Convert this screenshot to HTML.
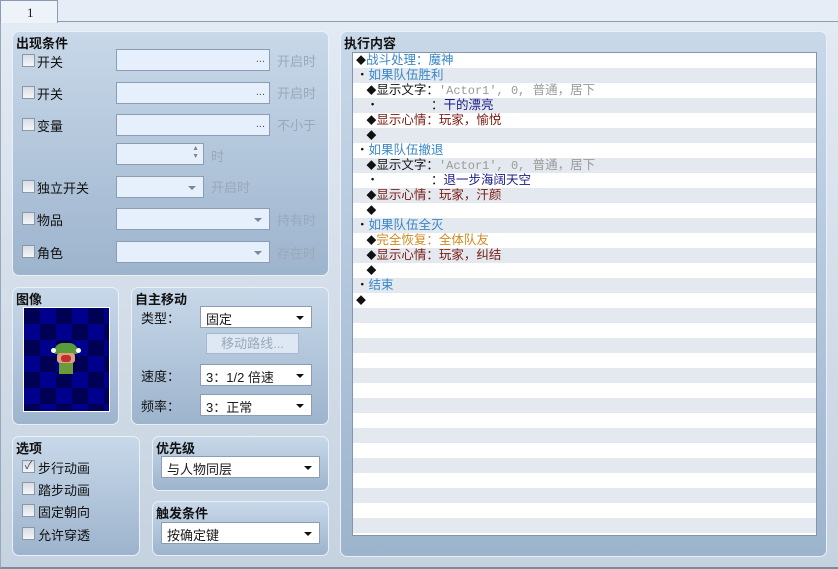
<!DOCTYPE html>
<html><head><meta charset="utf-8"><style>
*{box-sizing:border-box;margin:0;padding:0}
body{width:838px;height:569px;overflow:hidden;font-family:"Liberation Sans","Noto Sans CJK SC",sans-serif;font-size:13px;color:#1a1a1a;position:relative;background:#e6edf6}
.page{position:absolute;left:0;top:21px;width:838px;height:548px;background:linear-gradient(#e2eaf4,#c5d2df);border-top:1px solid #8a9cb2;border-left:1px solid #98a8bb;border-bottom:2px solid #7d8a99}
.tab{position:absolute;left:0;top:0;width:58px;height:23px;background:#eef3fa;border:1px solid #8a9cb2;border-bottom:none;z-index:2;font-family:"Liberation Serif",serif;font-size:13px;padding:4px 0 0 26px}
.g{position:absolute;border-radius:7px;background:linear-gradient(#c8d8e9,#9db4cd);border:1px solid #e8f0f8}
.t{position:absolute;left:3px;top:1px;font-weight:bold;font-size:13px;color:#111}
.in{position:absolute;background:#e6f0fc;border:1px solid #8c9db3;height:22px}
.dots{position:absolute;right:4px;top:3px;font-size:11px;color:#555}
.gray{position:absolute;color:#9aa8ba;font-size:13px}
.cb{position:absolute;width:13px;height:13px;border:1px solid #8a97a6;background:linear-gradient(#d8dde3,#f4f6f8)}
.lb{position:absolute;font-size:13px;color:#111}
.arr{position:absolute;right:7px;top:9px;width:0;height:0;border-left:4px solid transparent;border-right:4px solid transparent;border-top:4px solid #7a8898}
.sel{position:absolute;background:#fff;border:1px solid #8c9db3;height:22px;padding:2px 5px;font-size:13px}
.sel .arr{border-top-color:#111}
.list{position:absolute;left:352px;top:52px;width:465px;height:484px;border:1px solid #8594a8;overflow:hidden;background:#fff}
.row{height:15px;line-height:15px;font-size:12.5px;white-space:nowrap;padding-left:3px}
.row:nth-child(even){background:#e3e9ef}
.d{font-size:10px;color:#111}
.b{color:#3a87c8}.k{color:#111}.m{color:#9a9a9a;font-family:"Liberation Mono","Noto Sans CJK SC",monospace;font-size:12px}.n{color:#1a1a8a}.r{color:#7a1a10}.o{color:#d08a20}
</style></head><body>
<div class="tab">1</div>
<div class="page"></div>

<div class="g" style="left:12px;top:31px;width:317px;height:245px">
<div class="t">出现条件</div></div>
<div class="cb" style="left:22px;top:54px"></div><div class="lb" style="left:37px;top:52px">开关</div>
<div class="in" style="left:116px;top:49px;width:154px"><span class="dots">...</span></div><div class="gray" style="left:277px;top:51px">开启时</div>
<div class="cb" style="left:22px;top:86px"></div><div class="lb" style="left:37px;top:84px">开关</div>
<div class="in" style="left:116px;top:82px;width:154px"><span class="dots">...</span></div><div class="gray" style="left:277px;top:83px">开启时</div>
<div class="cb" style="left:22px;top:118px"></div><div class="lb" style="left:37px;top:116px">变量</div>
<div class="in" style="left:116px;top:114px;width:154px"><span class="dots">...</span></div><div class="gray" style="left:277px;top:115px">不小于</div>
<div class="in" style="left:116px;top:143px;width:88px"><span style="position:absolute;right:4px;top:1px;font-size:7px;color:#888;line-height:8px">▲<br>▼</span></div><div class="gray" style="left:211px;top:146px">时</div>
<div class="cb" style="left:22px;top:180px"></div><div class="lb" style="left:37px;top:178px">独立开关</div>
<div class="in" style="left:116px;top:176px;width:88px"><span class="arr"></span></div><div class="gray" style="left:211px;top:177px">开启时</div>
<div class="cb" style="left:22px;top:212px"></div><div class="lb" style="left:37px;top:210px">物品</div>
<div class="in" style="left:116px;top:208px;width:154px"><span class="arr"></span></div><div class="gray" style="left:277px;top:210px">持有时</div>
<div class="cb" style="left:22px;top:245px"></div><div class="lb" style="left:37px;top:243px">角色</div>
<div class="in" style="left:116px;top:241px;width:154px"><span class="arr"></span></div><div class="gray" style="left:277px;top:243px">存在时</div>

<div class="g" style="left:12px;top:287px;width:107px;height:138px"><div class="t">图像</div></div>
<div style="position:absolute;left:23px;top:307px;width:87px;height:105px;border:1px solid #fff;background-color:#000055;background-image:conic-gradient(#00008c 25%,#000055 0 50%,#00008c 0 75%,#000055 0);background-size:32px 32px;background-position:0 0"></div>
<div style="position:absolute;left:54px;top:343px;width:24px;height:11px;background:#5a9a3a;border-radius:9px 9px 2px 2px"></div>
<div style="position:absolute;left:57px;top:353px;width:18px;height:10px;background:#e0a080;border-radius:3px"></div>
<div style="position:absolute;left:61px;top:355px;width:10px;height:7px;background:#c03030;border-radius:3px"></div>
<div style="position:absolute;left:59px;top:363px;width:14px;height:11px;background:#6a9a3a"></div>
<div style="position:absolute;left:51px;top:348px;width:5px;height:5px;background:#fff;border-radius:3px"></div>
<div style="position:absolute;left:76px;top:348px;width:5px;height:5px;background:#fff;border-radius:3px"></div>

<div class="g" style="left:131px;top:287px;width:198px;height:138px"><div class="t">自主移动</div></div>
<div class="lb" style="left:141px;top:308px">类型：</div>
<div class="sel" style="left:200px;top:306px;width:112px">固定<span class="arr"></span></div>
<div style="position:absolute;left:206px;top:333px;width:93px;height:21px;border:1px solid #a8b8cc;background:#dde8f4;color:#9aa8ba;font-size:13px;text-align:center;line-height:19px">移动路线...</div>
<div class="lb" style="left:141px;top:366px">速度：</div>
<div class="sel" style="left:200px;top:364px;width:112px">3：1/2 倍速<span class="arr"></span></div>
<div class="lb" style="left:141px;top:396px">频率：</div>
<div class="sel" style="left:200px;top:394px;width:112px">3：正常<span class="arr"></span></div>

<div class="g" style="left:12px;top:436px;width:128px;height:120px"><div class="t">选项</div></div>
<div class="cb" style="left:22px;top:460px;font-size:11px;line-height:11px;color:#445;text-align:center">✓</div><div class="lb" style="left:38px;top:458px">步行动画</div>
<div class="cb" style="left:22px;top:482px"></div><div class="lb" style="left:38px;top:480px">踏步动画</div>
<div class="cb" style="left:22px;top:504px"></div><div class="lb" style="left:38px;top:502px">固定朝向</div>
<div class="cb" style="left:22px;top:527px"></div><div class="lb" style="left:38px;top:525px">允许穿透</div>

<div class="g" style="left:152px;top:436px;width:177px;height:55px"><div class="t">优先级</div></div>
<div class="sel" style="left:161px;top:456px;width:159px">与人物同层<span class="arr"></span></div>
<div class="g" style="left:152px;top:501px;width:177px;height:55px"><div class="t">触发条件</div></div>
<div class="sel" style="left:161px;top:522px;width:159px">按确定键<span class="arr"></span></div>

<div class="g" style="left:340px;top:31px;width:487px;height:526px"><div class="t">执行内容</div></div>
<div class="list">
<div class="row"><span class="d">◆</span><span class="b">战斗处理：魔神</span></div>
<div class="row"><span class="k">・</span><span class="b">如果队伍胜利</span></div>
<div class="row">&nbsp;&nbsp;&nbsp;<span class="d">◆</span><span class="k">显示文字：</span><span class="m">'Actor1', 0, </span><span style="color:#9a9a9a">普通，居下</span></div>
<div class="row">&nbsp;&nbsp;&nbsp;<span class="k">・&nbsp;&nbsp;&nbsp;&nbsp;&nbsp;&nbsp;&nbsp;&nbsp;&nbsp;&nbsp;&nbsp;&nbsp;&nbsp;&nbsp;&nbsp;：</span><span class="n">干的漂亮</span></div>
<div class="row">&nbsp;&nbsp;&nbsp;<span class="d">◆</span><span class="r">显示心情：玩家，愉悦</span></div>
<div class="row">&nbsp;&nbsp;&nbsp;<span class="d">◆</span></div>
<div class="row"><span class="k">・</span><span class="b">如果队伍撤退</span></div>
<div class="row">&nbsp;&nbsp;&nbsp;<span class="d">◆</span><span class="k">显示文字：</span><span class="m">'Actor1', 0, </span><span style="color:#9a9a9a">普通，居下</span></div>
<div class="row">&nbsp;&nbsp;&nbsp;<span class="k">・&nbsp;&nbsp;&nbsp;&nbsp;&nbsp;&nbsp;&nbsp;&nbsp;&nbsp;&nbsp;&nbsp;&nbsp;&nbsp;&nbsp;&nbsp;：</span><span class="n">退一步海阔天空</span></div>
<div class="row">&nbsp;&nbsp;&nbsp;<span class="d">◆</span><span class="r">显示心情：玩家，汗颜</span></div>
<div class="row">&nbsp;&nbsp;&nbsp;<span class="d">◆</span></div>
<div class="row"><span class="k">・</span><span class="b">如果队伍全灭</span></div>
<div class="row">&nbsp;&nbsp;&nbsp;<span class="d">◆</span><span class="o">完全恢复：全体队友</span></div>
<div class="row">&nbsp;&nbsp;&nbsp;<span class="d">◆</span><span class="r">显示心情：玩家，纠结</span></div>
<div class="row">&nbsp;&nbsp;&nbsp;<span class="d">◆</span></div>
<div class="row"><span class="k">・</span><span class="b">结束</span></div>
<div class="row"><span class="d">◆</span></div>
<div class="row"></div><div class="row"></div><div class="row"></div><div class="row"></div><div class="row"></div><div class="row"></div><div class="row"></div><div class="row"></div><div class="row"></div><div class="row"></div><div class="row"></div><div class="row"></div><div class="row"></div><div class="row"></div><div class="row"></div><div class="row"></div><div class="row"></div>
</div>
</body></html>
